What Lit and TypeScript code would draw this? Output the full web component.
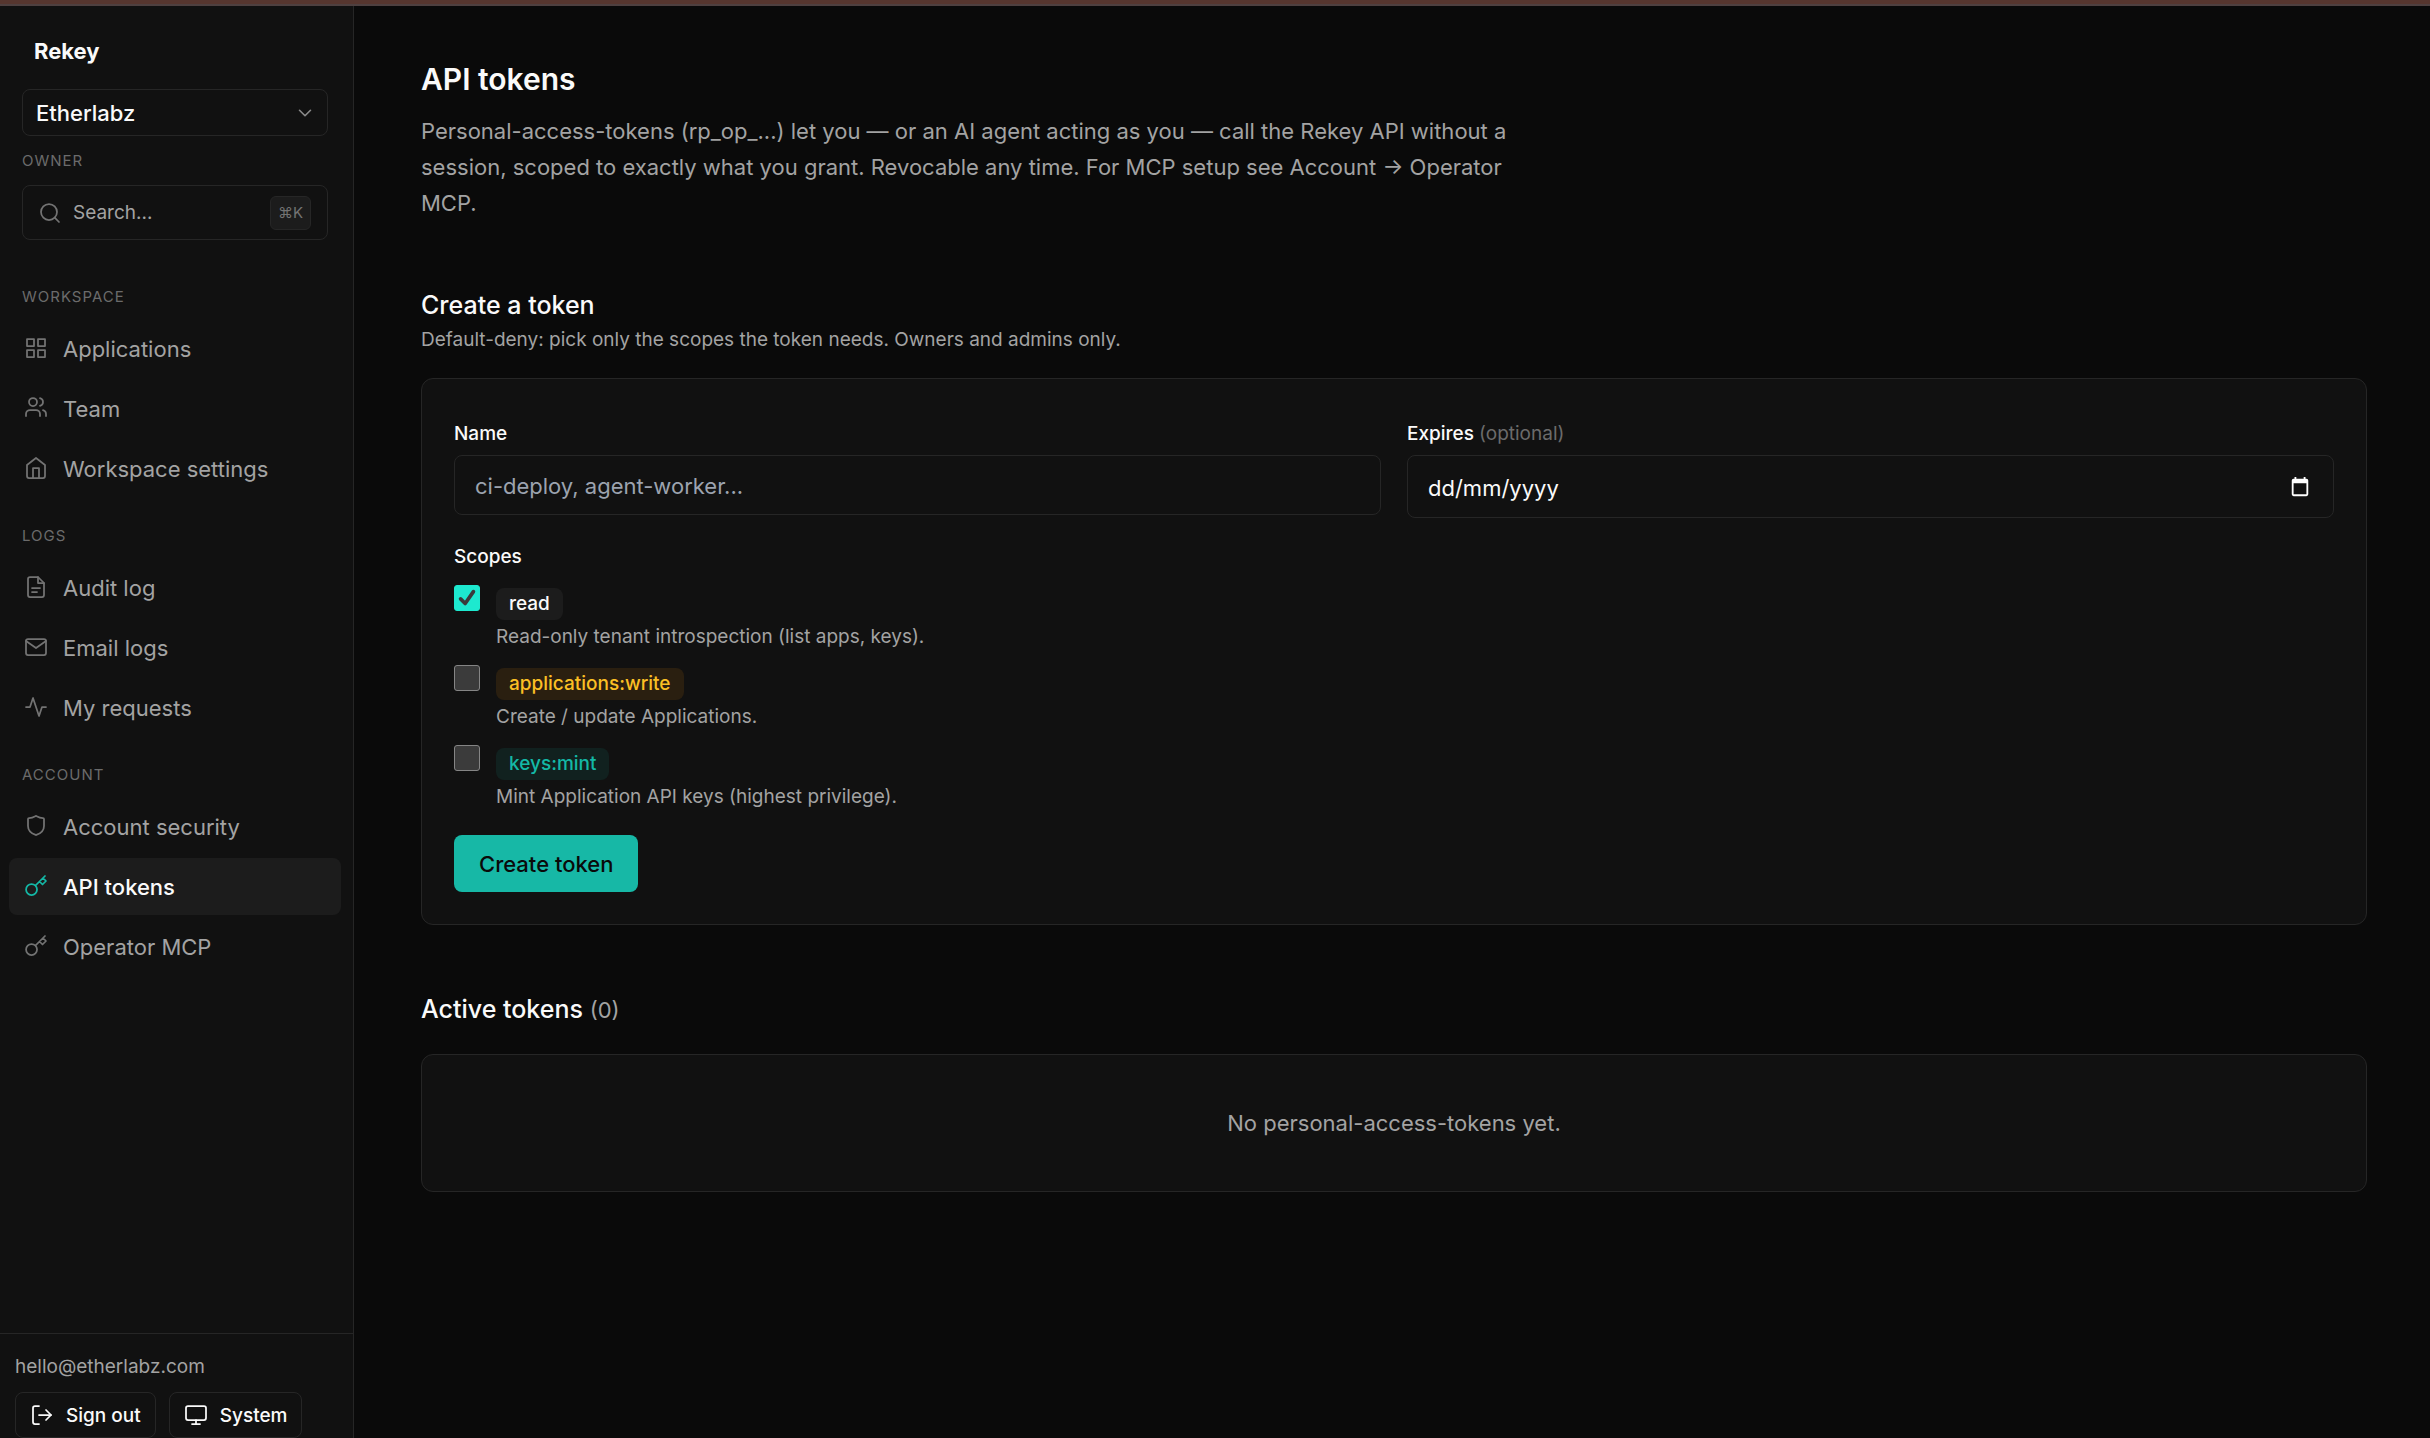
import { LitElement, html, css, svg, nothing } from "lit";
import { customElement, property, state } from "lit/decorators.js";
import { classMap } from "lit/directives/class-map.js";

const ICONS: Record<string, unknown> = {
  grid: svg`<rect x="3" y="3" width="7" height="7"/><rect x="14" y="3" width="7" height="7"/><rect x="3" y="14" width="7" height="7"/><rect x="14" y="14" width="7" height="7"/>`,
  users: svg`<path d="M16 20v-2a4 4 0 0 0-4-4H6a4 4 0 0 0-4 4v2"/><circle cx="9" cy="6" r="4"/><path d="M22 20v-2a4 4 0 0 0-3-3.87"/><path d="M16 2.13a4 4 0 0 1 0 7.75"/>`,
  home: svg`<path d="M3 9l9-7 9 7v11a2 2 0 0 1-2 2H5a2 2 0 0 1-2-2z"/><path d="M9 22V12h6v10"/>`,
  file: svg`<path d="M14 2H6a2 2 0 0 0-2 2v16a2 2 0 0 0 2 2h12a2 2 0 0 0 2-2V8z"/><path d="M14 2v6h6"/><path d="M8 13h8"/><path d="M8 17h5"/>`,
  mail: svg`<rect x="2" y="4" width="20" height="16" rx="2"/><path d="M22 6l-10 7L2 6"/>`,
  activity: svg`<path d="M22 12h-4l-3 9L9 3l-3 9H2"/>`,
  shield: svg`<path d="M20 12c0 5-3.5 7.5-7.66 8.95a1 1 0 0 1-.67-.01C7.5 19.5 4 17 4 12V5a1 1 0 0 1 1-1c2 0 4.5-.7 6.24-1.72a1.17 1.17 0 0 1 1.52 0C14.51 3.3 17 4 19 4a1 1 0 0 1 1 1z"/>`,
  key: svg`<path d="M21 2l-2 2m-7.61 7.61a5.5 5.5 0 1 1-7.778 7.778 5.5 5.5 0 0 1 7.777-7.777zm0 0L15.5 7.5m0 0l3 3L22 7l-3-3m-3.5 3.5L19 4"/>`,
  search: svg`<circle cx="11" cy="11" r="8"/><path d="M21 21l-4.3-4.3"/>`,
  chevron: svg`<path d="M6 9l6 6 6-6"/>`,
  signout: svg`<path d="M9 21H5a2 2 0 0 1-2-2V5a2 2 0 0 1 2-2h4"/><path d="M16 17l5-5-5-5"/><path d="M21 12H9"/>`,
  monitor: svg`<rect x="2" y="3" width="20" height="14" rx="2"/><path d="M8 21h8"/><path d="M12 17v4"/>`,
  calendar: svg`<path fill="currentColor" stroke="none" fill-rule="evenodd" d="M19 3h-1V1h-2v2H8V1H6v2H5a2 2 0 0 0-2 2v15a2 2 0 0 0 2 2h14a2 2 0 0 0 2-2V5a2 2 0 0 0-2-2zM5 8h14v12H5z"/>`,
  check: svg`<path d="M5 13l5 5L19 5"/>`,
};

@customElement("ui-icon")
class UiIcon extends LitElement {
  @property() name = "";
  static styles = css`
    :host { display: block; flex: none; width: 24px; height: 24px; }
    .glyph {
      display: block; width: 100%; height: 100%; fill: none; stroke: currentColor;
      stroke-width: var(--icon-stroke, 1.75); stroke-linecap: round; stroke-linejoin: round;
    }
  `;
  render() {
    return html`<svg class="glyph" viewBox="0 0 24 24" aria-hidden="true">${ICONS[this.name]}</svg>`;
  }
}

interface NavItem { icon: string; label: string; active?: boolean }

const NAV: { title: string; items: NavItem[] }[] = [
  {
    title: "Workspace",
    items: [
      { icon: "grid", label: "Applications" },
      { icon: "users", label: "Team" },
      { icon: "home", label: "Workspace settings" },
    ],
  },
  {
    title: "Logs",
    items: [
      { icon: "file", label: "Audit log" },
      { icon: "mail", label: "Email logs" },
      { icon: "activity", label: "My requests" },
    ],
  },
  {
    title: "Account",
    items: [
      { icon: "shield", label: "Account security" },
      { icon: "key", label: "API tokens", active: true },
      { icon: "key", label: "Operator MCP" },
    ],
  },
];

@customElement("app-sidebar")
class AppSidebar extends LitElement {
  static styles = css`
    :host {
      display: flex; flex-direction: column; box-sizing: border-box;
      background: #111; border-right: 1px solid #262626; color: #fafafa;
    }
    * { box-sizing: border-box; }
    .head { display: flex; flex-direction: column; padding: 29px 25px 0 22px; }
    .brand {
      font-size: 22px; line-height: 32px; font-weight: 700; color: #fafafa;
      text-decoration: none; padding-left: 12px; margin-bottom: 22px;
    }
    .org { display: grid; align-items: center; }
    .org-select, .org-arrow { grid-area: 1 / 1; }
    .org-select {
      appearance: none; width: 100%; height: 47px; padding: 0 40px 0 13px;
      background: transparent; border: 1px solid #262626; border-radius: 8px;
      font: inherit; font-size: 22px; font-weight: 500; color: #fafafa;
    }
    .org-arrow { justify-self: end; width: 22px; height: 22px; margin-right: 12px; color: #8a8a8a; pointer-events: none; }
    .caption {
      margin: 0; font-size: 15px; line-height: 20px; font-weight: 400;
      letter-spacing: 1px; text-transform: uppercase; color: #6b6b6b;
    }
    .role { margin: 15px 0 14px; }
    .search {
      display: flex; align-items: center; gap: 11px; width: 100%; height: 55px; padding: 0 16px 0 15px;
      background: transparent; border: 1px solid #262626; border-radius: 8px;
      font: inherit; font-size: 19px; color: #a3a3a3; text-align: left;
    }
    .search ui-icon { color: #737373; }
    .search-label { flex: 1; }
    .kbd {
      display: flex; align-items: center; justify-content: center; width: 41px; height: 34px;
      background: #1c1c1c; border: 1px solid #262626; border-radius: 6px;
      font: inherit; font-size: 15px; color: #737373;
    }
    .nav { flex: 1; min-height: 0; display: flex; flex-direction: column; gap: 29px; padding: 47px 12px 0 9px; }
    .group .caption { padding-left: 13px; margin-bottom: 13px; }
    .links { display: flex; flex-direction: column; gap: 3px; list-style: none; margin: 0; padding: 0; }
    .link {
      display: flex; align-items: center; gap: 15px; height: 57px; padding: 0 15px; border-radius: 8px;
      font-size: 22px; color: #a3a3a3; text-decoration: none;
    }
    .link ui-icon { color: #737373; margin-bottom: 2px; }
    .link.active { background: #1c1c1c; color: #fafafa; font-weight: 500; }
    .link.active ui-icon { color: #14b8a6; }
    .foot { border-top: 1px solid #262626; padding: 18px 15px 0; }
    .email { margin: 0 0 10px; font-size: 19px; line-height: 30px; color: #a3a3a3; }
    .actions { display: flex; gap: 13px; }
    .action {
      display: flex; align-items: center; gap: 12px; height: 46px; padding: 0 14px;
      background: transparent; border: 1px solid #262626; border-radius: 8px;
      font: inherit; font-size: 19px; font-weight: 500; color: #fafafa;
    }
  `;
  render() {
    return html`
      <div class="head">
        <a class="brand" href="#">Rekey</a>
        <div class="org">
          <select class="org-select" aria-label="Organization"><option>Etherlabz</option></select>
          <ui-icon class="org-arrow" name="chevron"></ui-icon>
        </div>
        <p class="caption role">Owner</p>
        <button class="search" type="button">
          <ui-icon name="search"></ui-icon>
          <span class="search-label">Search...</span>
          <kbd class="kbd">⌘K</kbd>
        </button>
      </div>
      <nav class="nav">
        ${NAV.map(
          (group) => html`
            <section class="group">
              <h2 class="caption">${group.title}</h2>
              <ul class="links">
                ${group.items.map(
                  (item) => html`<li>
                    <a class=${classMap({ link: true, active: !!item.active })} href="#"
                      aria-current=${item.active ? "page" : nothing}>
                      <ui-icon name=${item.icon}></ui-icon><span>${item.label}</span>
                    </a>
                  </li>`
                )}
              </ul>
            </section>
          `
        )}
      </nav>
      <footer class="foot">
        <p class="email">hello@etherlabz.com</p>
        <div class="actions">
          <button class="action" type="button"><ui-icon name="signout"></ui-icon>Sign out</button>
          <button class="action" type="button"><ui-icon name="monitor"></ui-icon>System</button>
        </div>
      </footer>
    `;
  }
}

interface Scope { id: string; tone: string; text: string; checked: boolean }

@customElement("token-form")
class TokenForm extends LitElement {
  @state() private scopes: Scope[] = [
    { id: "read", tone: "neutral", text: "Read-only tenant introspection (list apps, keys).", checked: true },
    { id: "applications:write", tone: "amber", text: "Create / update Applications.", checked: false },
    { id: "keys:mint", tone: "teal", text: "Mint Application API keys (highest privilege).", checked: false },
  ];
  static styles = css`
    :host { display: block; }
    * { box-sizing: border-box; }
    .card {
      display: flex; flex-direction: column; padding: 39px 32px 32px;
      background: #111; border: 1px solid #262626; border-radius: 12px;
    }
    .fields { display: grid; grid-template-columns: 1fr 1fr; gap: 26px; align-items: start; }
    .field { display: flex; flex-direction: column; gap: 5px; }
    .label { font-size: 19px; line-height: 32px; font-weight: 500; color: #fafafa; padding: 0; }
    .optional { font-weight: 400; color: #6b6b6b; }
    .box {
      width: 100%; height: 60px; padding: 2px 20px 0; background: #111; border: 1px solid #262626;
      border-radius: 8px; font: inherit; font-size: 22px; color: #fafafa;
    }
    .box::placeholder { color: #9ca3af; opacity: 1; }
    .date { display: grid; align-items: center; }
    .date > * { grid-area: 1 / 1; }
    .date .box { height: 63px; }
    .date .box::placeholder { color: #fafafa; }
    .picker {
      justify-self: end; display: grid; place-items: center; width: 32px; height: 32px; margin-right: 18px;
      padding: 0; border: 0; background: transparent; color: #fff;
    }
    .picker ui-icon { width: 22px; height: 22px; }
    .scopes { border: 0; margin: 23px 0 0; padding: 0; min-width: 0; }
    .scope-list { display: flex; flex-direction: column; gap: 8px; padding-top: 12px; }
    .scope { display: grid; grid-template-columns: 26px 1fr; column-gap: 16px; height: 72px; }
    .tick { display: grid; width: 26px; height: 26px; }
    .tick > * { grid-area: 1 / 1; }
    .tick-input {
      appearance: none; width: 26px; height: 26px; margin: 0; background: #3b3b3b;
      border: 1px solid #858585; border-radius: 3px;
    }
    .tick-input:checked { background: #1de9cf; border-color: #1de9cf; }
    .tick-mark { width: 22px; height: 22px; place-self: center; color: #3b3b3b; pointer-events: none; --icon-stroke: 4; }
    .detail { display: flex; flex-direction: column; align-items: flex-start; gap: 2px; padding-top: 3px; }
    .badge { padding: 0 13px; border-radius: 8px; font-size: 19px; line-height: 32px; font-weight: 500; }
    .neutral { background: #1c1c1c; color: #fafafa; }
    .amber { background: #2a1f10; color: #fbbf24; }
    .teal { background: #11211f; color: #14b8a6; }
    .hint { font-size: 19px; line-height: 30px; color: #a3a3a3; }
    .submit {
      align-self: flex-start; height: 57px; margin-top: 18px; padding: 0 25px; border: 0; border-radius: 8px;
      background: #17b8a6; color: #0a0a0a; font: inherit; font-size: 22px; font-weight: 500;
    }
  `;
  private toggle(index: number) {
    this.scopes = this.scopes.map((s, i) => (i === index ? { ...s, checked: !s.checked } : s));
  }
  render() {
    return html`
      <form class="card" @submit=${(e: Event) => e.preventDefault()}>
        <div class="fields">
          <div class="field">
            <label class="label" for="name">Name</label>
            <input class="box" id="name" type="text" placeholder="ci-deploy, agent-worker..." />
          </div>
          <div class="field">
            <label class="label" for="expires">Expires <span class="optional">(optional)</span></label>
            <div class="date">
              <input class="box" id="expires" type="text" inputmode="numeric" placeholder="dd/mm/yyyy" />
              <button class="picker" type="button" aria-label="Open calendar"><ui-icon name="calendar"></ui-icon></button>
            </div>
          </div>
        </div>
        <fieldset class="scopes">
          <legend class="label">Scopes</legend>
          <div class="scope-list">
            ${this.scopes.map(
              (scope, i) => html`
                <label class="scope">
                  <span class="tick">
                    <input class="tick-input" type="checkbox" .checked=${scope.checked} @change=${() => this.toggle(i)} />
                    ${scope.checked ? html`<ui-icon class="tick-mark" name="check"></ui-icon>` : nothing}
                  </span>
                  <span class="detail">
                    <span class="badge ${scope.tone}">${scope.id}</span>
                    <span class="hint">${scope.text}</span>
                  </span>
                </label>
              `
            )}
          </div>
        </fieldset>
        <button class="submit" type="submit">Create token</button>
      </form>
    `;
  }
}

@customElement("app-root")
class AppRoot extends LitElement {
  static styles = css`
    :host {
      display: flex; flex-direction: column; min-height: 100vh; background: #0a0a0a; color: #fafafa;
      font-family: Inter, "Liberation Sans", sans-serif; font-size: 22px;
    }
    * { box-sizing: border-box; }
    .strip { height: 6px; background: #56362f; border-bottom: 2px solid #4e4040; }
    .shell { flex: 1; display: grid; grid-template-columns: 354px minmax(0, 1fr); }
    .main { padding: 54px 63px 64px 67px; }
    .title { margin: 0; font-size: 30px; line-height: 38px; font-weight: 600; }
    .lead { margin: 15px 0 0; max-width: 1100px; line-height: 36px; color: #a3a3a3; }
    .section-title { margin: 68px 0 0; font-size: 25px; line-height: 32px; font-weight: 500; }
    .section-note { margin: 4px 0 23px; font-size: 19px; line-height: 30px; color: #a3a3a3; }
    .count { font-size: 22px; font-weight: 400; color: #a3a3a3; }
    .empty {
      margin: 28px 0 0; padding: 50px 32px; text-align: center; line-height: 36px; color: #a3a3a3;
      background: #111; border: 1px solid #262626; border-radius: 12px;
    }
  `;
  render() {
    return html`
      <div class="strip"></div>
      <div class="shell">
        <app-sidebar></app-sidebar>
        <main class="main">
          <h1 class="title">API tokens</h1>
          <p class="lead">
            Personal-access-tokens (rp_op_...) let you — or an AI agent acting as you — call the Rekey API without a
            session, scoped to exactly what you grant. Revocable any time. For MCP setup see Account → Operator MCP.
          </p>
          <h2 class="section-title">Create a token</h2>
          <p class="section-note">Default-deny: pick only the scopes the token needs. Owners and admins only.</p>
          <token-form></token-form>
          <h2 class="section-title">Active tokens <span class="count">(0)</span></h2>
          <p class="empty">No personal-access-tokens yet.</p>
        </main>
      </div>
    `;
  }
}
